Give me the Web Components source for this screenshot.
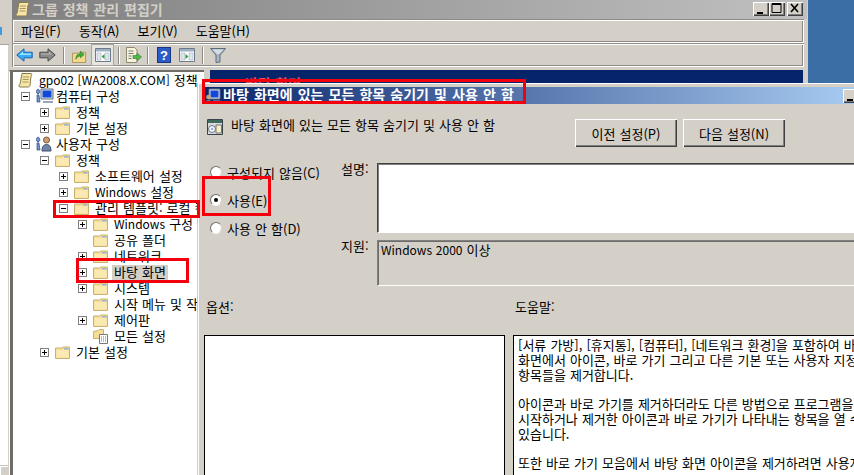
<!DOCTYPE html>
<html lang="ko">
<head>
<meta charset="utf-8">
<title>그룹 정책 관리 편집기</title>
<style>
  html, body { margin: 0; padding: 0; width: 854px; height: 475px; overflow: hidden; }
  body { position: relative; background: #3a6ea5; font: 13px "Noto Sans CJK KR", "Liberation Sans", sans-serif; word-spacing: .45px; color: #000; }
</style>
</head>
<body>
<gp-back-window></gp-back-window>
<gp-editor></gp-editor>
<gp-policy-dialog></gp-policy-dialog>

<!-- annotations drawn on top of the screenshot -->
<gp-mark style="left:202px;top:79px;width:324px;height:25px"></gp-mark>
<gp-mark style="left:202px;top:176px;width:69px;height:40px"></gp-mark>
<gp-mark style="left:53px;top:200px;width:147px;height:18px"></gp-mark>
<gp-mark style="left:76px;top:258px;width:113px;height:25px"></gp-mark>

<script>
const ICONS = {
  folder: `<svg viewBox="0 0 15 15"><path d="M.5 3.5v10.500h14V2.500H8l-1 1z" fill="#f6dd96" stroke="#c9b26e"/><path d="M1.500 5.500h12v7.500h-12z" fill="#fbe9b4"/><path d="M9 3.500h4.500V5H9z" fill="#8fb6d8"/></svg>`,
  scroll: `<svg viewBox="0 0 15 16"><path d="M4 1.500h9c1 0 1 2 0 2.500l-1 9.500c-.2 1-1 1.500-2 1.500H2c-1.500 0-1.500-2.500 0-2.500z" fill="#f6e6a8" stroke="#8a7a4a"/><path d="M5 5h6M4.700 7.500h6M4.400 10h6" stroke="#a89660"/></svg>`,
  computer: `<svg viewBox="0 0 18 16"><path d="M5 1h12v10H5z" fill="#dfe4ec" stroke="#5d6a80"/><path d="M6.500 2.500h9v7h-9z" fill="#1048d8"/><path d="M7 13h10v2H7z" fill="#9aa4b4"/><path d="M2 6a1.700 2.400 0 1 1 .1 0zM1 7h2l1 7H1z" fill="#6f93c9" stroke="#2e4d80" stroke-width=".7"/></svg>`,
  user: `<svg viewBox="0 0 18 16"><circle cx="10.500" cy="4" r="3" fill="#caa176" stroke="#7b5a3a"/><path d="M6 15c0-5 2-6.500 4.500-6.500S15 10 15 15z" fill="#6d86a8" stroke="#3d516e"/><path d="M2 6a1.700 2.400 0 1 1 .1 0zM1 7h2l1 7H1z" fill="#6f93c9" stroke="#2e4d80" stroke-width=".7"/></svg>`,
  settings: `<svg viewBox="0 0 15 16"><path d="M.5 3.500v7h10V1.500H6l-1 1z" fill="#f6dd96" stroke="#c9b26e"/><path d="M6.500 6.500h8v9h-8z" fill="#fff" stroke="#777"/><path d="M8 9h5M8 11h5M8 13h5" stroke="#777" stroke-dasharray="1 1"/></svg>`,
  back: `<svg viewBox="0 0 17 14"><path d="M.8 7 8 .8v3.400h8.200v5.600H8v3.400z" fill="#35aef5" stroke="#1a64b0"/><path d="M3 7l4-3.400V5.500h8V7z" fill="#9be0ff"/></svg>`,
  forward: `<svg viewBox="0 0 17 14"><path d="M16.200 7 9 .8v3.400H.8v5.600H9v3.400z" fill="#8a8a8a" stroke="#4a4a4a"/><path d="M2 5.500h8V3.500L13 6.500H2z" fill="#b4b4b4"/></svg>`,
  up: `<svg viewBox="0 0 16 16"><path d="M.5 5.500v10h14v-11H8l-1 1z" fill="#f3d88e" stroke="#a8955c"/><path d="M4 12c0-4 2-6 5-6V3.500l4 3.500-4 3.500V8.500c-2 0-3.500 1-5 3.500z" fill="#3fae3f" stroke="#1f7a1f" stroke-width=".6"/></svg>`,
  panes: `<svg viewBox="0 0 16 14"><path d="M.5.500h15v13H.500z" fill="#fff" stroke="#6d7a8a"/><path d="M1 1h14v2.500H1z" fill="#9fb0c4"/><path d="M2 5h4v7H2zM10 5h4v7h-4z" fill="#dfe6ee" stroke="#a5b0bc" stroke-width=".6"/><path d="M9.500 6v5L6.500 8.500z" fill="#2f9e44"/></svg>`,
  panesRight: `<svg viewBox="0 0 16 14"><path d="M.5.500h15v13H.500z" fill="#fff" stroke="#6d7a8a"/><path d="M1 1h14v2.500H1z" fill="#9fb0c4"/><path d="M2 5h4v7H2zM10 5h4v7h-4z" fill="#dfe6ee" stroke="#a5b0bc" stroke-width=".6"/><path d="M6.500 6v5l3-2.500z" fill="#2f9e44"/></svg>`,
  export: `<svg viewBox="0 0 17 16"><path d="M1.500.500h8l2.500 2.500v12.500H1.500z" fill="#f8f2d8" stroke="#8d8a70"/><path d="M3.500 4h5M3.500 6.500h5M3.500 9h3M3.500 11.500h3" stroke="#6d7a8a"/><path d="M8 8.500h4V6l4.500 4-4.500 4v-2.500H8z" fill="#52b84a" stroke="#2c7d2c" stroke-width=".6"/></svg>`,
  help: `<svg viewBox="0 0 14 16"><rect x=".5" y=".5" width="13" height="15" fill="#2a5cc8" stroke="#17367e"/><text x="7" y="13" font-family="Liberation Sans" font-weight="bold" font-size="13" text-anchor="middle" fill="#fff">?</text></svg>`,
  filter: `<svg viewBox="0 0 16 15"><path d="M.5.500h15L10 7v7l-4 .5V7z" fill="#a9b6c2" stroke="#5d6d7c"/><path d="M2.500 1.500h11L9 6H7z" fill="#d5dee6"/></svg>`,
  titleIcon: `<svg viewBox="0 0 16 16"><path d="M4 1h11v10H4z" fill="#dfe4ec" stroke="#5d6a80"/><path d="M5.500 2.500h8v7h-8z" fill="#1048d8"/><circle cx="3.500" cy="9" r="2.300" fill="#caa176"/><path d="M.5 15.500c0-3 1.500-4 3-4s3 1 3 4z" fill="#5a7a96"/><path d="M8 12.500h7v2H8z" fill="#9aa4b4"/></svg>`,
  policy: `<svg viewBox="0 0 16 16"><path d="M.5.500h15v15H.500z" fill="#d8dce0" stroke="#39434e"/><path d="M1 1h14v3H1z" fill="#3f6b5a"/><path d="M9 6h5.500v8H9z" fill="#f3efc8" stroke="#77756a"/><circle cx="5" cy="10" r="3.500" fill="#eef2f6" stroke="#6d7a8a"/><circle cx="5" cy="10" r="1" fill="#8c9aa8"/></svg>`
};

class GpIcon extends HTMLElement {
  constructor() {
    super();
    this.attachShadow({ mode: 'open' });
    const w = this.getAttribute('w') || 15;
    const h = this.getAttribute('h') || 15;
    this.shadowRoot.innerHTML = `
      <style>
        :host { display: block; flex: none; width: ${w}px; height: ${h}px; }
        svg { display: block; width: 100%; height: 100%; }
      </style>
      ${ICONS[this.getAttribute('name')]}`;
  }
}

class GpMark extends HTMLElement {
  constructor() {
    super();
    this.attachShadow({ mode: 'open' });
    this.shadowRoot.innerHTML = `
      <style>
        :host { display: block; position: absolute; box-sizing: border-box; border: 3px solid #f4000c; }
      </style>`;
  }
}

// the other console window, only its right edge shows
class GpBackWindow extends HTMLElement {
  constructor() {
    super();
    this.attachShadow({ mode: 'open' });
    this.shadowRoot.innerHTML = `
      <style>
        :host { display: flex; flex-direction: column; position: absolute; left: 0; top: 0; width: 9px; height: 475px; background: #d4d0c8; overflow: hidden; }
        .head { height: 45px; flex: none; display: flex; align-items: flex-start; border-bottom: 1px solid #a8a59e; box-sizing: border-box; }
        .head i { width: 2px; height: 8px; margin-top: 27px; background: #3c9be0; }
        .body { flex: 1; width: 8px; background: #fff; box-sizing: border-box; }
        .corner { height: 10px; flex: none; width: 8px; border-top: 1px solid #c8c5be; box-sizing: border-box; padding: 1px 0 0 1px; background: #fff; }
        .corner i { display: block; height: 100%; background: #d4d0c8; }
      </style>
      <div class="head"><i></i></div>
      <div class="body"></div>
      <div class="corner"><i></i></div>`;
  }
}

class GpCaptionButton extends HTMLElement {
  constructor() {
    super();
    this.attachShadow({ mode: 'open' });
    const glyphs = {
      min: '<path d="M3 10h6v2H3z"/>',
      max: '<path d="M2 1.500h9v9H2z" fill="none" stroke="#000"/><path d="M2 2h9v1H2z"/>',
      close: '<path d="M3 2l7 8M10 2l-7 8" stroke="#000" stroke-width="1.600" fill="none"/>'
    };
    this.shadowRoot.innerHTML = `
      <style>
        :host { display: block; flex: none; width: 16px; height: 14px; box-sizing: border-box; background: #d4d0c8; box-shadow: inset 1px 1px #fff, inset -1px -1px #404040, inset -2px -2px #808080; }
        svg { display: block; width: 13px; height: 13px; margin: 0 0 0 1px; }
      </style>
      <svg viewBox="0 0 13 13">${glyphs[this.getAttribute('kind')]}</svg>`;
  }
}

class GpMenuBar extends HTMLElement {
  constructor() {
    super();
    this.attachShadow({ mode: 'open' });
    this.shadowRoot.innerHTML = `
      <style>
        :host { display: flex; align-items: center; gap: 18px; height: 24px; padding: 0 0 2px 9px; box-sizing: border-box; box-shadow: inset 1px 1px #8d8b85, inset 2px 2px #fff, inset -1px -1px #fff, inset -2px -2px #8d8b85; }
      </style>
      <span>파일(F)</span><span>동작(A)</span><span>보기(V)</span><span>도움말(H)</span>`;
  }
}

class GpToolbar extends HTMLElement {
  constructor() {
    super();
    this.attachShadow({ mode: 'open' });
    this.shadowRoot.innerHTML = `
      <style>
        :host { display: flex; align-items: center; height: 24px; padding-left: 1px; box-sizing: border-box; box-shadow: inset 1px 1px #8d8b85, inset 2px 2px #fff, inset -1px -1px #fff, inset -2px -2px #8d8b85; }
        .btn { width: 23px; height: 22px; flex: none; display: flex; align-items: center; justify-content: center; box-sizing: border-box; }
        .btn.on { background: #e8e6e0; box-shadow: inset 1px 1px #fff, inset -1px -1px #a8a59e; outline: 1px solid #a8a59e; outline-offset: -1px; }
        .btn.narrow { width: 20px; }
        .sep { flex: none; width: 1px; height: 17px; background: #8d8b85; border-right: 1px solid #fff; margin: 0 3px 0 4px; }
        .sep.tight { margin-right: 2px; }
      </style>
      <div class="btn"><gp-icon name="back" w="17" h="14"></gp-icon></div>
      <div class="btn"><gp-icon name="forward" w="17" h="14"></gp-icon></div>
      <div class="sep"></div>
      <div class="btn"><gp-icon name="up" w="15" h="15"></gp-icon></div>
      <div class="btn on"><gp-icon name="panes" w="16" h="14"></gp-icon></div>
      <div class="sep"></div>
      <div class="btn narrow"><gp-icon name="export" w="17" h="16"></gp-icon></div>
      <div class="sep"></div>
      <div class="btn"><gp-icon name="help" w="14" h="16"></gp-icon></div>
      <div class="btn"><gp-icon name="panesRight" w="16" h="14"></gp-icon></div>
      <div class="sep tight"></div>
      <div class="btn"><gp-icon name="filter" w="16" h="15"></gp-icon></div>`;
  }
}

class GpTreeRow extends HTMLElement {
  constructor() {
    super();
    this.attachShadow({ mode: 'open' });
    const level = Number(this.getAttribute('level') || 0);
    const toggle = this.getAttribute('toggle');
    const icon = this.getAttribute('icon') || 'folder';
    const root = this.hasAttribute('root');
    const wide = icon === 'computer' || icon === 'user';
    this.shadowRoot.innerHTML = `
      <style>
        :host { display: flex; align-items: center; height: 16px; white-space: nowrap; padding-left: ${root ? 4 : 7 + (level - 1) * 19}px; }
        .box { flex: none; width: 9px; height: 9px; box-sizing: border-box; border: 1px solid #808080; background: #fff; margin-right: 6px; position: relative; }
        .box.empty { border: 0; background: none; }
        .box b { position: absolute; background: #000; left: 1px; top: 3px; width: 5px; height: 1px; }
        .box b + b { left: 3px; top: 1px; width: 1px; height: 5px; }
        .label { align-self: flex-end; margin-left: ${wide ? 0 : 4}px; padding: 0 2px 1px; line-height: 14px; }
        :host([selected]) .label { background: #d4d0c8; }
        :host([root]) .label { margin-left: 4px; }
      </style>
      ${root ? '' : `<div class="box ${toggle ? '' : 'empty'}">${toggle ? '<b></b>' : ''}${toggle === '+' ? '<b></b>' : ''}</div>`}
      <gp-icon name="${icon}" w="${wide ? 18 : 15}" h="16"></gp-icon>
      <span class="label"><slot></slot></span>`;
  }
}

class GpEditor extends HTMLElement {
  constructor() {
    super();
    this.attachShadow({ mode: 'open' });
    this.shadowRoot.innerHTML = `
      <style>
        :host { display: flex; flex-direction: column; position: absolute; left: 9px; top: 0; width: 799px; height: 475px; background: #d4d0c8; overflow: hidden; box-sizing: border-box; }
        .chrome { margin-left: 3px; margin-right: 4px; flex: none; }
        .title { height: 19px; margin-right: -3px; display: flex; align-items: center; box-sizing: border-box; padding: 0 4px 1px 3px; background: linear-gradient(90deg, #808080, #c0c0c0); color: #d4d0c8; font-weight: bold; font-size: 14px; word-spacing: 1px; }
        .title span { margin-left: 2px; flex: 1; }
        .title gp-caption-button:last-child { margin-left: 2px; }
        .panes { flex: 1; display: flex; margin-top: 3px; min-height: 0; }
        .tree { flex: none; width: 195px; background: #fff; overflow: hidden; border-left: 1px solid #fff; box-shadow: inset 3px 0 #6e6c68; padding-left: 4px; box-sizing: border-box; border-top: 2px solid #6e6c68; }
        .pane { flex: none; margin-left: 6px; width: 593px; height: 13px; background: #06246a; color: #e85060; font-size: 14px; font-weight: bold; padding-left: 35px; box-sizing: border-box; overflow: hidden; line-height: 26px; }
      </style>
      <div class="chrome">
        <div class="title">
          <gp-icon name="scroll" w="15" h="16"></gp-icon>
          <span>그룹 정책 관리 편집기</span>
          <gp-caption-button kind="min"></gp-caption-button>
          <gp-caption-button kind="max"></gp-caption-button>
          <gp-caption-button kind="close"></gp-caption-button>
        </div>
        <gp-menu-bar></gp-menu-bar>
        <gp-toolbar></gp-toolbar>
      </div>
      <div class="panes">
        <div class="tree">
          <gp-tree-row root icon="scroll"><span style="font-size:12px">gpo02 [WA2008.X.COM]</span> 정책</gp-tree-row>
          <gp-tree-row level="1" toggle="-" icon="computer">컴퓨터 구성</gp-tree-row>
          <gp-tree-row level="2" toggle="+">정책</gp-tree-row>
          <gp-tree-row level="2" toggle="+">기본 설정</gp-tree-row>
          <gp-tree-row level="1" toggle="-" icon="user">사용자 구성</gp-tree-row>
          <gp-tree-row level="2" toggle="-">정책</gp-tree-row>
          <gp-tree-row level="3" toggle="+">소프트웨어 설정</gp-tree-row>
          <gp-tree-row level="3" toggle="+"><span style="font-size:12px">Windows</span> 설정</gp-tree-row>
          <gp-tree-row level="3" toggle="-">관리 템플릿: 로컬 컴퓨터</gp-tree-row>
          <gp-tree-row level="4" toggle="+"><span style="font-size:12px">Windows</span> 구성 요소</gp-tree-row>
          <gp-tree-row level="4">공유 폴더</gp-tree-row>
          <gp-tree-row level="4" toggle="+">네트워크</gp-tree-row>
          <gp-tree-row level="4" toggle="+" selected>바탕 화면</gp-tree-row>
          <gp-tree-row level="4" toggle="+">시스템</gp-tree-row>
          <gp-tree-row level="4">시작 메뉴 및 작업 표시줄</gp-tree-row>
          <gp-tree-row level="4" toggle="+">제어판</gp-tree-row>
          <gp-tree-row level="4" icon="settings">모든 설정</gp-tree-row>
          <gp-tree-row level="2" toggle="+">기본 설정</gp-tree-row>
        </div>
        <div class="pane">바탕 화면</div>
      </div>`;
  }
}

class GpRadio extends HTMLElement {
  constructor() {
    super();
    this.attachShadow({ mode: 'open' });
    this.shadowRoot.innerHTML = `
      <style>
        :host { display: flex; align-items: center; gap: 5px; height: 18px; }
        .dot { flex: none; width: 12px; height: 12px; box-sizing: border-box; border-radius: 50%; background: #fff; border: 1px solid; border-color: #6e6c68 #d4d0c8 #f4f2ee #6e6c68; display: flex; align-items: center; justify-content: center; }
        :host([checked]) .dot::after { content: ""; width: 4px; height: 4px; border-radius: 50%; background: #000; }
      </style>
      <div class="dot"></div><span><slot></slot></span>`;
  }
}

class GpButton extends HTMLElement {
  constructor() {
    super();
    this.attachShadow({ mode: 'open' });
    this.shadowRoot.innerHTML = `
      <style>
        :host { display: flex; align-items: center; justify-content: center; flex: none; width: 102px; height: 28px; box-sizing: border-box; background: #d4d0c8; box-shadow: inset 1px 1px #fff, inset -1px -1px #404040, inset -2px -2px #808080; }
      </style>
      <slot></slot>`;
  }
}

class GpPolicyDialog extends HTMLElement {
  constructor() {
    super();
    this.attachShadow({ mode: 'open' });
    this.shadowRoot.innerHTML = `
      <style>
        :host { display: flex; flex-direction: column; position: absolute; left: 197px; top: 83px; width: 700px; height: 400px; box-sizing: border-box; background: #d4d0c8; padding: 4px 0 0 1px; border-left: 1px solid #cfcbc4; box-shadow: inset 1px 1px #fff; overflow: hidden; }
        .title { height: 17px; flex: none; margin-left: 3px; margin-right: 3px; display: flex; align-items: center; gap: 1px; padding-left: 3px; color: #fff; font-weight: bold; font-size: 14px; word-spacing: 1.200px; background: linear-gradient(90deg, #0a246a, #a6caf0 650px); }
        .title gp-icon { margin-right: 1px; }
        .title span { width: 619px; flex: none; white-space: nowrap; padding-bottom: 3px; line-height: 14px; }
        .head { height: 59px; flex: none; display: flex; align-items: flex-start; padding: 15px 0 0 8px; box-sizing: border-box; }
        .head span { margin: -1px 0 0 8px; width: 344px; flex: none; line-height: 14px; }
        .head .buttons { display: flex; gap: 6px; }
        .fields { flex: none; display: grid; grid-template-columns: 137px 36px 1fr; grid-template-rows: 70px 46px; row-gap: 7px; padding-left: 5px; }
        .radios { grid-row: 1 / span 2; display: flex; flex-direction: column; gap: 10px; padding: 0 0 0 6px; margin-top: 0; }
        .label { line-height: 13px; margin-top: -1px; }
        .text { box-sizing: border-box; padding: 0 3px; border: 1px solid; white-space: nowrap; line-height: 17px; }
        .desc { background: #fff; border-color: #404040 #d4d0c8 #fff #404040; box-shadow: inset 1px 1px #808080; }
        .support { border-color: #808080 #d4d0c8 #fff #808080; box-shadow: inset 1px 1px #6e6c68; }
        .captions { height: 49px; flex: none; display: flex; align-items: flex-start; box-sizing: border-box; padding: 14px 0 0 7px; line-height: 14px; }
        .captions span:first-child { width: 309px; flex: none; }
        .boxes { flex: 1; min-height: 0; display: flex; gap: 8px; padding-left: 5px; }
        .options, .help { background: #fff; box-sizing: border-box; border: 1px solid #000; }
        .options { width: 301px; flex: none; }
        .help { flex: 1; padding: 2px 4px; white-space: pre; line-height: 14.750px; overflow: hidden; }
      </style>
      <div class="title">
        <gp-icon name="titleIcon" w="16" h="16"></gp-icon>
        <span>바탕 화면에 있는 모든 항목 숨기기 및 사용 안 함</span>
        <gp-caption-button kind="min"></gp-caption-button>
        <gp-caption-button kind="max"></gp-caption-button>
        <gp-caption-button kind="close"></gp-caption-button>
      </div>
      <div class="head">
        <gp-icon name="policy" w="16" h="16"></gp-icon>
        <span>바탕 화면에 있는 모든 항목 숨기기 및 사용 안 함</span>
        <div class="buttons">
          <gp-button>이전 설정(P)</gp-button>
          <gp-button>다음 설정(N)</gp-button>
        </div>
      </div>
      <div class="fields">
        <div class="radios">
          <gp-radio>구성되지 않음(C)</gp-radio>
          <gp-radio checked>사용(E)</gp-radio>
          <gp-radio>사용 안 함(D)</gp-radio>
        </div>
        <div class="label">설명:</div>
        <div class="text desc"></div>
        <div class="label">지원:</div>
        <div class="text support"><span style="font-size:12px">Windows 2000</span> 이상</div>
      </div>
      <div class="captions"><span>옵션:</span><span>도움말:</span></div>
      <div class="boxes">
        <div class="options"></div>
        <div class="help">[서류 가방], [휴지통], [컴퓨터], [네트워크 환경]을 포함하여 바탕
화면에서 아이콘, 바로 가기 그리고 다른 기본 또는 사용자 지정
항목들을 제거합니다.

아이콘과 바로 가기를 제거하더라도 다른 방법으로 프로그램을
시작하거나 제거한 아이콘과 바로 가기가 나타내는 항목을 열 수
있습니다.

또한 바로 가기 모음에서 바탕 화면 아이콘을 제거하려면 사용자</div>
      </div>`;
  }
}

customElements.define('gp-icon', GpIcon);
customElements.define('gp-mark', GpMark);
customElements.define('gp-back-window', GpBackWindow);
customElements.define('gp-caption-button', GpCaptionButton);
customElements.define('gp-menu-bar', GpMenuBar);
customElements.define('gp-toolbar', GpToolbar);
customElements.define('gp-tree-row', GpTreeRow);
customElements.define('gp-editor', GpEditor);
customElements.define('gp-radio', GpRadio);
customElements.define('gp-button', GpButton);
customElements.define('gp-policy-dialog', GpPolicyDialog);
</script>
</body>
</html>
